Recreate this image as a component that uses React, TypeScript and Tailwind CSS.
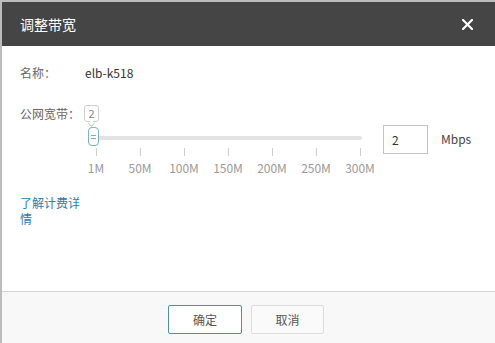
import React from 'react';

const ticks = ['1M', '50M', '100M', '150M', '200M', '250M', '300M'];

function BandwidthSlider({ value }: { value: number }) {
  return (
    <div className="relative w-[284px] pt-[1px]">
      {/* value bubble */}
      <div className="relative ml-0 flex h-[17px] w-[15px] items-center justify-center rounded-[3px] border border-[#cfcfcf] bg-white text-[11px] leading-none text-[#888]">
        {value}
        <span className="absolute left-[4px] top-[15px] h-[5px] w-[5px] rotate-45 border-b border-r border-[#cfcfcf] bg-white" />
      </div>
      <div className="relative mt-[5px] h-[19px]">
        <div className="absolute left-[9px] right-[6px] top-[9px] h-[4px] rounded-full bg-[#e3e3e3]" />
        <div className="absolute left-[4px] top-0 flex h-[19px] w-[11px] flex-col items-center justify-center gap-[2px] rounded-[4px] border border-[#7aafcf] bg-white">
          <span className="h-px w-[5px] bg-[#7aafcf]" />
          <span className="h-px w-[5px] bg-[#7aafcf]" />
        </div>
      </div>
      <div className="ml-[12px] flex w-[264px] justify-between pt-[2px]">
        {ticks.map((t) => (
          <div key={t} className="relative flex w-0 flex-col items-center">
            <span className="h-[8px] w-px bg-[#d0d0d0]" />
            <span className="mt-[4px] whitespace-nowrap text-[12px] leading-[16px] text-[#9a9a9a]">{t}</span>
          </div>
        ))}
      </div>
    </div>
  );
}

export default function App() {
  return (
    <div className="h-[343px] w-[495px] overflow-hidden bg-[#bcbcbc] pl-[2px] pt-[2px] font-['Noto_Sans_CJK_SC',sans-serif]">
      <div className="flex h-[341px] flex-col bg-white">
        <div className="flex h-[44px] shrink-0 items-center justify-between bg-[#454545] pl-[18px] pr-[22px]">
          <span className="text-[14px] text-white">调整带宽</span>
          <svg width="11" height="11" viewBox="0 0 11 11" className="text-white">
            <path d="M1 1L10 10M10 1L1 10" stroke="currentColor" strokeWidth="2.2" strokeLinecap="square" />
          </svg>
        </div>

        <div className="flex-1 pl-[18px] pt-[18px] text-[12px] leading-[18px]">
          <div className="flex">
            <span className="w-[65px] text-[#666]">名称：</span>
            <span className="text-[#333]">elb-k518</span>
          </div>

          <div className="mt-[22px] flex items-start">
            <span className="w-[64px] pt-[1px] leading-[18px] text-[#666]">公网宽带：</span>
            <BandwidthSlider value={2} />
            <div className="ml-[15px] mt-[21px] flex h-[29px] w-[45px] items-center border border-[#c4c4c4] pl-[8px] text-[12px] text-[#333]">
              2
            </div>
            <span className="ml-[13px] mt-[26px] text-[12px] text-[#444]">Mbps</span>
          </div>

          <div className="mt-[19px] w-[66px] text-[12px] leading-[16px] text-[#2b7bb4]">了解计费详情</div>
        </div>

        <div className="flex h-[52px] shrink-0 justify-center gap-[9px] border-t border-[#d6d6d6] bg-[#f8f8f8] pr-[5px] pt-[13px]">
          <button className="h-[29px] w-[74px] rounded-[2px] border border-[#4f8fb3] bg-white text-[12px] text-[#555]">
            确定
          </button>
          <button className="h-[29px] w-[73px] rounded-[2px] border border-[#dcdcdc] bg-[#fafafa] text-[12px] text-[#555]">
            取消
          </button>
        </div>
      </div>
    </div>
  );
}
